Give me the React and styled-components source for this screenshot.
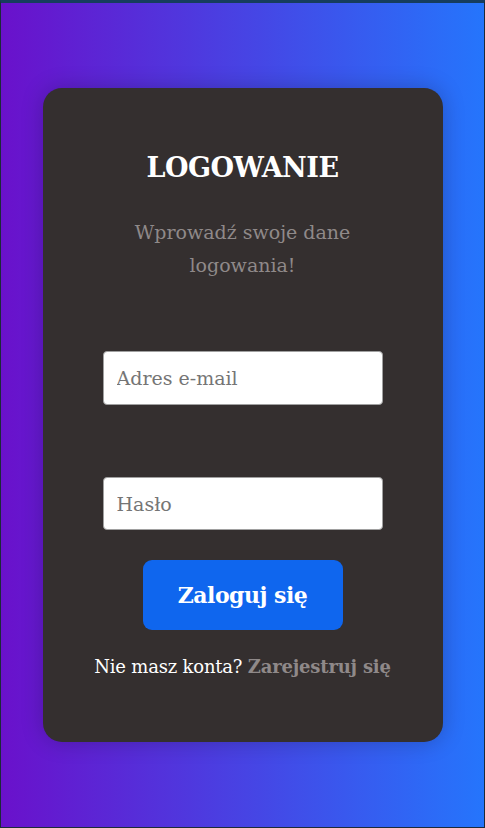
import React from "react";
import styled, { createGlobalStyle } from "styled-components";

const Global = createGlobalStyle`
  html, body { margin: 0; padding: 0; background: #163a5a; }
  * { box-sizing: border-box; }
  body { font-family: "DejaVu Serif", "Liberation Serif", serif; }
`;

const Page = styled.div`
  height: 828px;
  border: 1px solid #1c2a3a;
  border-top: 3px solid #163d5e;
  background: linear-gradient(to right, #6a11cb, #2575fc);
  display: flex;
  align-items: center;
  justify-content: center;
`;

const Card = styled.div`
  width: 400px;
  height: 654px;
  background: #342f2f;
  border-radius: 19px;
  box-shadow: 0 0 22px rgba(0, 0, 0, 0.22);
  padding-top: 62px;
  display: flex;
  flex-direction: column;
  align-items: center;
`;

const Title = styled.h1`
  margin: 0;
  font-size: 27px;
  line-height: 36px;
  font-weight: 700;
  color: #ffffff;
  letter-spacing: -0.5px;
`;

const Subtitle = styled.p`
  margin: 30px 0 0;
  max-width: 240px;
  text-align: center;
  font-size: 19px;
  line-height: 33px;
  color: #8f8989;
  letter-spacing: 0;
`;

const Input = styled.input`
  width: 280px;
  height: ${(p) => p.$h}px;
  margin-top: ${(p) => p.$mt}px;
  border: 1px solid #a0a0a0;
  border-radius: 4px;
  background: #ffffff;
  padding: 0 13px;
  font-family: inherit;
  font-size: 19px;
  color: #333;
  outline: none;
  &::placeholder { color: #757575; }
`;

const Button = styled.button`
  width: 200px;
  height: 70px;
  margin-top: 30px;
  border: none;
  border-radius: 9px;
  background: #0f66ee;
  color: #ffffff;
  font-family: inherit;
  font-size: 22px;
  font-weight: 700;
  letter-spacing: -0.5px;
  cursor: pointer;
`;

const Footer = styled.p`
  margin: 25px 0 0;
  font-size: 18px;
  line-height: 24px;
  color: #ffffff;
  letter-spacing: -0.2px;
`;

const Link = styled.a`
  color: #8f8989;
  font-weight: 700;
  text-decoration: none;
`;

export default function App() {
  return (
    <>
      <Global />
      <Page>
        <Card>
          <Title>LOGOWANIE</Title>
          <Subtitle>Wprowadź swoje dane logowania!</Subtitle>
          <Input type="email" placeholder="Adres e-mail" $h={54} $mt={69} />
          <Input type="password" placeholder="Hasło" $h={53} $mt={72} />
          <Button>Zaloguj się</Button>
          <Footer>
            Nie masz konta? <Link href="#">Zarejestruj się</Link>
          </Footer>
        </Card>
      </Page>
    </>
  );
}
